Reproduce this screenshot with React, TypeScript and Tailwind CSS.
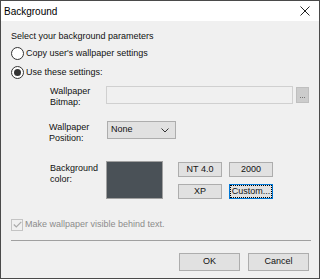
import React from "react";

const font = { fontFamily: '"Liberation Sans", Arial, sans-serif' };

function Radio({ checked, label }: { checked?: boolean; label: string }) {
  return (
    <div className="flex items-center h-[19px]">
      <span className="w-[13px] h-[13px] rounded-full border border-[#333] bg-white flex items-center justify-center">
        {checked && <span className="w-[7px] h-[7px] rounded-full bg-[#333]" />}
      </span>
      <span className="ml-[2px]">{label}</span>
    </div>
  );
}

function Btn({ children, w, h = "h-[15px]", focus }: { children: React.ReactNode; w: string; h?: string; focus?: boolean }) {
  return (
    <div
      className={`${w} ${h} flex items-center justify-center bg-[#e1e1e1] border ${
        focus ? "border-[#0078d7]" : "border-[#adadad]"
      }`}
    >
      {focus ? (
        <span className="px-[1px] leading-[11px] outline outline-1 outline-dotted outline-black">{children}</span>
      ) : (
        children
      )}
    </div>
  );
}

export default function App() {
  return (
    <div
      className="w-[320px] h-[279px] border border-[#4a4a4a] flex flex-col bg-[#f0f0f0] text-[9px] text-[#111] overflow-hidden"
      style={font}
    >
      {/* title bar */}
      <div className="h-[20px] bg-white flex items-center justify-between pl-[3px] pr-[9px]">
        <span className="text-[10px] text-black">Background</span>
        <svg width="10" height="10" viewBox="0 0 10 10">
          <path d="M0.5 0.5L9.5 9.5M9.5 0.5L0.5 9.5" stroke="#222" strokeWidth="1" />
        </svg>
      </div>

      <div className="flex-1 flex flex-col px-[10px] pt-[8px]">
        <div className="h-[14px] leading-[14px]">Select your background parameters</div>
        <div className="mt-[1px]">
          <Radio label="Copy user's wallpaper settings" />
          <Radio checked label="Use these settings:" />
        </div>

        {/* bitmap row */}
        <div className="flex mt-[4px]">
          <div className="w-[95px] pl-[39px] leading-[11px]">
            Wallpaper
            <br />
            Bitmap:
          </div>
          <div className="w-[188px] h-[18px] border border-[#d0d0d0] bg-[#f0f0f0]" />
          <div className="ml-[3px] mt-[1px] w-[13px] h-[16px] bg-[#cccccc] border border-[#bfbfbf] flex items-end justify-center pb-[4px] gap-[1px]">
            <span className="w-[1px] h-[1px] bg-[#777]" />
            <span className="w-[1px] h-[1px] bg-[#777]" />
            <span className="w-[1px] h-[1px] bg-[#777]" />
          </div>
        </div>

        {/* position row */}
        <div className="flex mt-[13px]">
          <div className="w-[96px] pl-[38px] leading-[11px] pt-[1px]">
            Wallpaper
            <br />
            Position:
          </div>
          <div className="w-[69px] h-[18px] border border-[#adadad] bg-[#e1e1e1] flex items-center justify-between pl-[3px] pr-[6px]">
            <span>None</span>
            <svg width="8" height="5" viewBox="0 0 8 5">
              <path d="M0.5 0.5L4 4L7.5 0.5" fill="none" stroke="#333" strokeWidth="1" />
            </svg>
          </div>
        </div>

        {/* color row */}
        <div className="flex mt-[17px]">
          <div className="w-[95px] pl-[39px] leading-[11px] pt-[2px]">
            Background
            <br />
            color:
          </div>
          <div className="w-[57px] h-[38px] border border-[#a0a0a0] bg-[#4a5157]" />
          <div className="ml-[15px] pt-[1px] grid grid-cols-[44px_44px] gap-x-[7px] gap-y-[7px] content-start">
            <Btn w="w-[44px]">NT 4.0</Btn>
            <Btn w="w-[44px]">2000</Btn>
            <Btn w="w-[44px]">XP</Btn>
            <Btn w="w-[44px]" focus>
              Custom...
            </Btn>
          </div>
        </div>

        {/* checkbox */}
        <div className="flex items-center mt-[19px] h-[13px] text-[#8c8c8c]">
          <span className="w-[12px] h-[12px] border border-[#c4c4c4] bg-[#f0f0f0] flex items-center justify-center">
            <svg width="9" height="7" viewBox="0 0 9 7">
              <path d="M0.8 3.5L3.3 6L8.3 0.8" fill="none" stroke="#aaa" strokeWidth="1.2" />
            </svg>
          </span>
          <span className="ml-[2px]">Make wallpaper visible behind text.</span>
        </div>

        <div className="mt-[9px] h-[1px] bg-[#a0a0a0] w-[300px]" />

        <div className="flex justify-end gap-[8px] mt-[12px]">
          <Btn w="w-[61px]" h="h-[18px]">
            OK
          </Btn>
          <Btn w="w-[61px]" h="h-[18px]">
            Cancel
          </Btn>
        </div>
      </div>
    </div>
  );
}
